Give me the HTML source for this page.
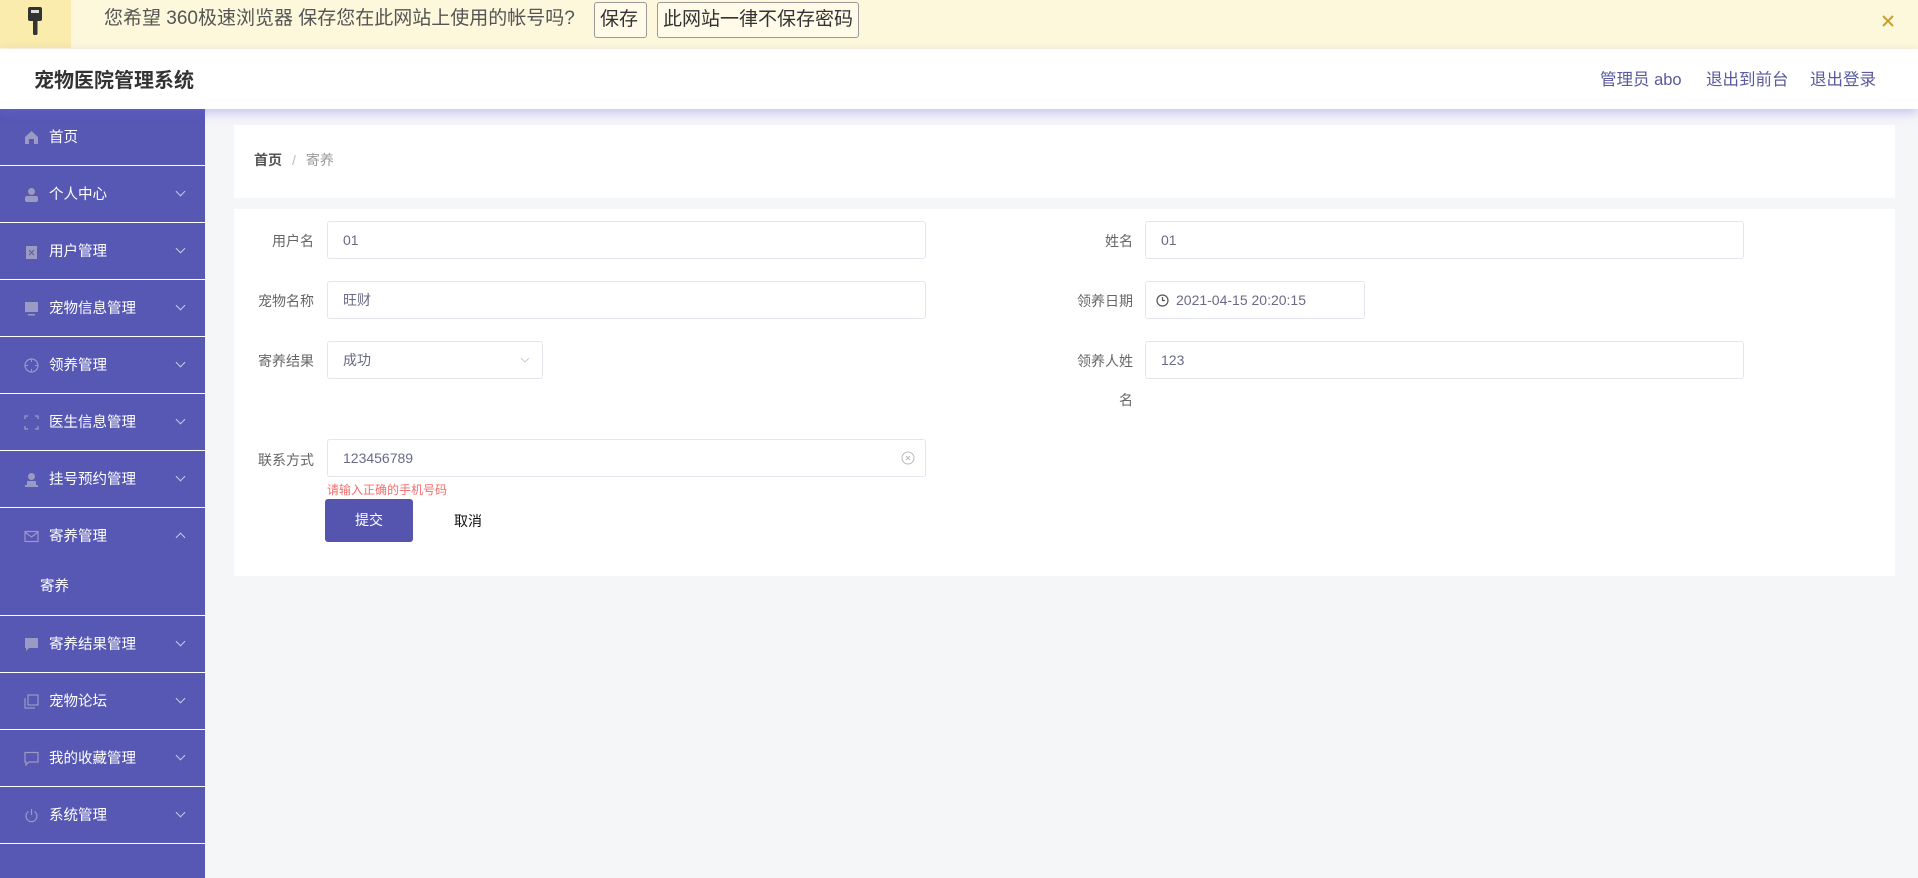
<!DOCTYPE html>
<html><head><meta charset="utf-8"><style>
*{box-sizing:border-box;margin:0;padding:0}
body{width:1918px;height:878px;overflow:hidden;background:#f5f6f8;font-family:"Liberation Sans","Noto Sans CJK SC",sans-serif;position:relative}
.top{position:absolute;left:0;top:0;width:1918px;height:49px;background:#fdf7db}
.key{position:absolute;left:0;top:0;width:71px;height:48px;background:#f9ecad}
.tmsg{position:absolute;left:104px;top:7px;font-size:19px;color:#555;line-height:24px}
.tbtn{position:absolute;top:2px;height:36px;border:1px solid #999;border-radius:3px;background:#fffbe8;font-size:19px;color:#333;line-height:34px;padding:0 5px}
.hdr{position:absolute;left:0;top:49px;width:1918px;height:60px;background:#fff;box-shadow:0 4px 10px rgba(110,110,230,.35);z-index:2}
.title{position:absolute;left:34px;top:15px;font-size:20px;font-weight:bold;color:#333}
.hl{position:absolute;top:17px;font-size:16.5px;color:#5a5a9e}
.side{position:absolute;left:0;top:109px;width:205px;height:769px;background:#5757b4;z-index:1}
.it{height:57px;border-bottom:1.5px solid #fff;position:relative;color:#fff;font-size:14.5px}
.it span{position:absolute;left:49px;top:17px}
.ic{position:absolute;left:24px;top:21px;width:15px;height:15px}
.ar{position:absolute;left:177px;top:22px;width:7px;height:7px;border-right:1.3px solid #c8c8e8;border-bottom:1.3px solid #c8c8e8;transform:rotate(45deg)}
.up{transform:rotate(-135deg);top:26px}
.card{position:absolute;background:#fff;left:234px;width:1661px}
.lab{position:absolute;font-size:14px;color:#666;text-align:right;width:120px}
.inp{position:absolute;height:38px;border:1px solid #e4e6ee;border-radius:3px;background:#fff;font-size:14px;color:#6a6a88;line-height:36px;padding-left:15px}
</style></head><body>
<div class="top">
 <div class="key"><svg width="71" height="48"><rect x="28" y="7" width="14" height="14" rx="2" fill="#333"/><rect x="31" y="10" width="8" height="3" fill="#ddd"/><rect x="33" y="20" width="4.5" height="15" rx="1.5" fill="#333"/></svg></div>
 <div class="tmsg">您希望 360极速浏览器 保存您在此网站上使用的帐号吗?</div>
 <div class="tbtn" style="left:594px;width:53px">保存</div>
 <div class="tbtn" style="left:657px;width:202px">此网站一律不保存密码</div>
 <svg style="position:absolute;left:1881px;top:14px" width="14" height="14"><path d="M2 2L12 12M12 2L2 12" stroke="#c8a030" stroke-width="2"/></svg>
</div>
<div class="hdr">
 <div class="title">宠物医院管理系统</div>
 <div class="hl" style="left:1600px">管理员 abo</div>
 <div class="hl" style="left:1706px">退出到前台</div>
 <div class="hl" style="left:1810px">退出登录</div>
</div>
<div class="side">
 <div class="it"><svg class="ic" viewBox="0 0 15 15"><path d="M1 7L7.5 1L14 7V14H10V9H5V14H1Z" fill="#9a9ac4"/></svg><span>首页</span></div>
 <div class="it"><svg class="ic" viewBox="0 0 15 15"><circle cx="7.5" cy="4.5" r="3.5" fill="#9a9ac4"/><rect x="1" y="9" width="13" height="6" rx="2" fill="#9a9ac4"/></svg><span>个人中心</span><i class="ar"></i></div>
 <div class="it"><svg class="ic" viewBox="0 0 15 15"><rect x="2" y="2" width="11" height="13" fill="#9a9ac4"/><path d="M5 6L10 11M10 6L5 11" stroke="#5757b4"/></svg><span>用户管理</span><i class="ar"></i></div>
 <div class="it"><svg class="ic" viewBox="0 0 15 15"><rect x="1" y="1" width="13" height="10" fill="#9a9ac4"/><rect x="4" y="13" width="7" height="1.5" fill="#9a9ac4"/></svg><span>宠物信息管理</span><i class="ar"></i></div>
 <div class="it"><svg class="ic" viewBox="0 0 15 15"><circle cx="7.5" cy="7.5" r="6.5" fill="none" stroke="#9a9ac4" stroke-width="1.2"/><path d="M7.5 1V4M7.5 11V14M1 7.5H4M11 7.5H14" stroke="#9a9ac4"/></svg><span>领养管理</span><i class="ar"></i></div>
 <div class="it"><svg class="ic" viewBox="0 0 15 15"><path d="M1 4V1H4M11 1H14V4M14 11V14H11M4 14H1V11" fill="none" stroke="#9a9ac4" stroke-width="1.3"/></svg><span>医生信息管理</span><i class="ar"></i></div>
 <div class="it"><svg class="ic" viewBox="0 0 15 15"><circle cx="7.5" cy="4.5" r="3.5" fill="#9a9ac4"/><rect x="3" y="9" width="9" height="4" fill="#9a9ac4"/><rect x="1" y="13" width="13" height="2" fill="#9a9ac4"/></svg><span>挂号预约管理</span><i class="ar"></i></div>
 <div class="it" style="height:108px"><svg class="ic" viewBox="0 0 15 15"><rect x="1" y="2.5" width="13" height="10" fill="none" stroke="#9a9ac4" stroke-width="1.2"/><path d="M1 3L7.5 8L14 3" fill="none" stroke="#9a9ac4" stroke-width="1.2"/></svg><span>寄养管理</span><i class="ar up"></i><span style="left:40px;top:67px">寄养</span></div>
 <div class="it"><svg class="ic" viewBox="0 0 15 15"><path d="M1 1H14V11H5L2 14V11H1Z" fill="#9a9ac4"/></svg><span>寄养结果管理</span><i class="ar"></i></div>
 <div class="it"><svg class="ic" viewBox="0 0 15 15"><rect x="4" y="1" width="10" height="10" fill="none" stroke="#9a9ac4" stroke-width="1.2"/><path d="M1 4V14H11" fill="none" stroke="#9a9ac4" stroke-width="1.2"/></svg><span>宠物论坛</span><i class="ar"></i></div>
 <div class="it"><svg class="ic" viewBox="0 0 15 15"><path d="M1 1.5H14V11H5L2 14V11H1Z" fill="none" stroke="#9a9ac4" stroke-width="1.2"/></svg><span>我的收藏管理</span><i class="ar"></i></div>
 <div class="it"><svg class="ic" viewBox="0 0 15 15"><path d="M4.5 3.5A5.5 5.5 0 1 0 10.5 3.5" fill="none" stroke="#9a9ac4" stroke-width="1.2"/><path d="M7.5 1V7" stroke="#9a9ac4" stroke-width="1.2"/></svg><span>系统管理</span><i class="ar"></i></div>
</div>
<div class="card" style="top:125px;height:73px"><div style="position:absolute;left:20px;top:25px;font-size:14px;color:#555"><b style="font-weight:bold;color:#555">首页</b><span style="color:#bbb;margin:0 10px">/</span><span style="color:#999">寄养</span></div></div>
<div class="card" style="top:209px;height:367px">
 <div class="lab" style="left:-40px;top:22px">用户名</div>
 <div class="inp" style="left:93px;top:12px;width:599px">01</div>
 <div class="lab" style="left:-40px;top:82px">宠物名称</div>
 <div class="inp" style="left:93px;top:72px;width:599px">旺财</div>
 <div class="lab" style="left:-40px;top:142px">寄养结果</div>
 <div class="inp" style="left:93px;top:132px;width:216px">成功<svg style="position:absolute;right:12px;top:14px" width="10" height="8"><path d="M1 2L5 6L9 2" fill="none" stroke="#ccc"/></svg></div>
 <div class="lab" style="left:-40px;top:241px">联系方式</div>
 <div class="inp" style="left:93px;top:230px;width:599px">123456789<svg style="position:absolute;right:10px;top:11px" width="14" height="14"><circle cx="7" cy="7" r="6" fill="none" stroke="#bbb"/><path d="M5 5L9 9M9 5L5 9" stroke="#bbb"/></svg></div>
 <div style="position:absolute;left:93px;top:272px;font-size:12px;color:#f56c6c">请输入正确的手机号码</div>
 <div style="position:absolute;left:91px;top:290px;width:88px;height:43px;background:#5555b0;border-radius:3px;color:#fff;font-size:14px;text-align:center;line-height:43px">提交</div>
 <div style="position:absolute;left:220px;top:302px;font-size:14px;color:#111">取消</div>
 <div class="lab" style="left:779px;top:22px">姓名</div>
 <div class="inp" style="left:911px;top:12px;width:599px">01</div>
 <div class="lab" style="left:779px;top:82px">领养日期</div>
 <div class="inp" style="left:911px;top:72px;width:220px;padding-left:30px"><svg style="position:absolute;left:10px;top:12px" width="13" height="13"><circle cx="6.5" cy="6.5" r="5.5" fill="none" stroke="#555" stroke-width="1.2"/><path d="M6.5 3V6.5H9" fill="none" stroke="#555" stroke-width="1.2"/></svg>2021-04-15 20:20:15</div>
 <div class="lab" style="left:779px;top:142px">领养人姓</div>
 <div class="lab" style="left:779px;top:181px">名</div>
 <div class="inp" style="left:911px;top:132px;width:599px">123</div>
</div>
</body></html>
